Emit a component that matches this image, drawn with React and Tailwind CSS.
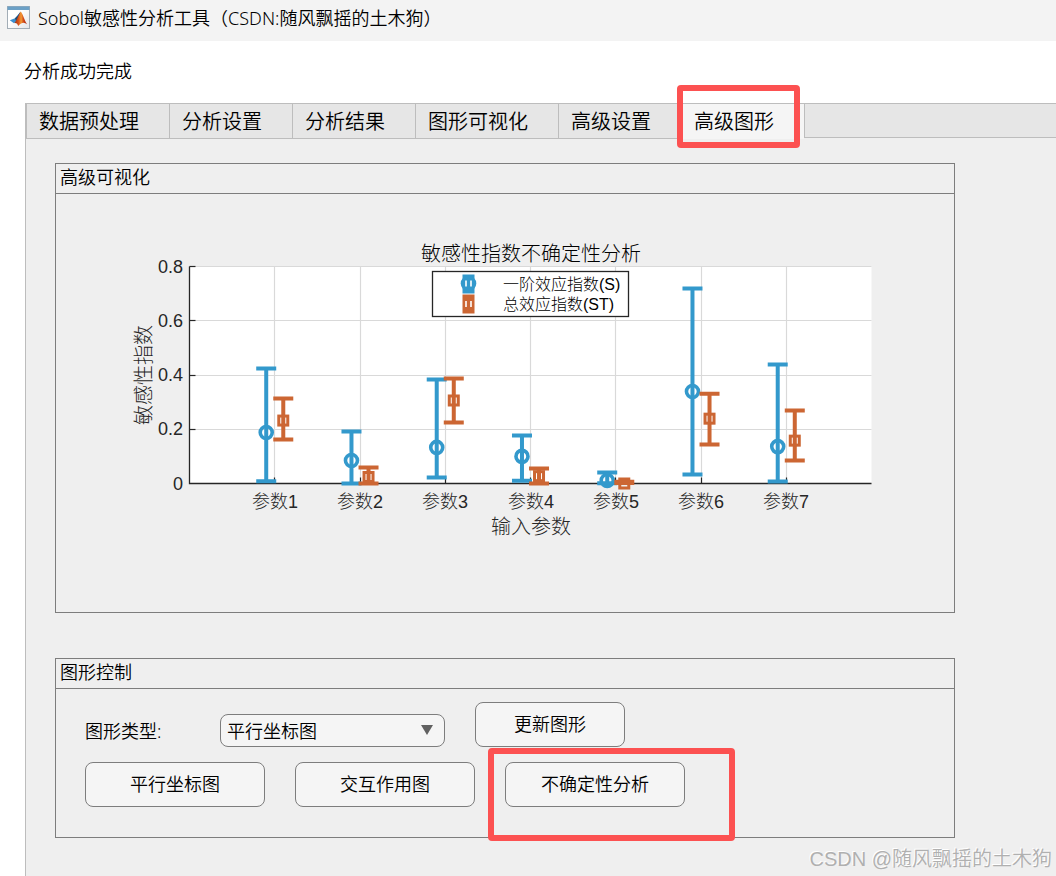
import React, { useState } from 'react';

const tabs = ['数据预处理', '分析设置', '分析结果', '图形可视化', '高级设置', '高级图形'];

const BLUE = '#3399cc';
const ORANGE = '#cc6633';

// [low, value, high] for the first-order (s) and total (st) index
const data = [
  { name: '参数1', s: [0.008, 0.188, 0.424], st: [0.162, 0.232, 0.313] },
  { name: '参数2', s: [0, 0.085, 0.192], st: [0, 0.024, 0.059] },
  { name: '参数3', s: [0.022, 0.133, 0.383], st: [0.225, 0.306, 0.387] },
  { name: '参数4', s: [0.01, 0.1, 0.177], st: [0, 0.027, 0.055] },
  { name: '参数5', s: [0.001, 0.011, 0.041], st: [0.002, 0, 0.006] },
  { name: '参数6', s: [0.033, 0.339, 0.719], st: [0.144, 0.239, 0.331] },
  { name: '参数7', s: [0.007, 0.136, 0.439], st: [0.085, 0.158, 0.269] },
];

const LEFT = 133.5;
const RIGHT = 815.5;
const TOP = 72.5;
const BOTTOM = 289.5;

const xPos = (v) => LEFT + ((RIGHT - LEFT) / 8) * v;
const yPos = (v) => BOTTOM - ((BOTTOM - TOP) / 0.8) * v;

const ErrorBar = ({ x, range, color, square }) => {
  const [low, mid, high] = range.map(yPos);
  return (
    <g stroke={color} strokeWidth="4" fill="none">
      <path d={`M${x} ${low}V${high}M${x - 10} ${low}h20M${x - 10} ${high}h20`} />
      {square ? (
        <rect x={x - 4.5} y={mid - 4.5} width="9" height="9" strokeWidth="3" />
      ) : (
        <circle cx={x} cy={mid} r="6" strokeWidth="3.6" />
      )}
    </g>
  );
};

const Chart = () => (
  <svg viewBox="0 0 898 418" className="block w-full" role="img" aria-label="敏感性指数不确定性分析">
    <rect x={LEFT} y={TOP - 0.5} width={RIGHT - LEFT} height={BOTTOM - TOP} fill="#fff" />

    {/* Grid */}
    <g stroke="#d9d9d9" strokeWidth="1.2">
      {[0.2, 0.4, 0.6, 0.8].map((v) => (
        <line key={v} x1={LEFT} x2={RIGHT} y1={Math.floor(yPos(v)) + 0.5} y2={Math.floor(yPos(v)) + 0.5} />
      ))}
      {data.map((d, i) => (
        <line key={d.name} x1={Math.floor(xPos(i + 1)) + 0.5} x2={Math.floor(xPos(i + 1)) + 0.5} y1={TOP} y2={BOTTOM} />
      ))}
    </g>

    {/* Axes */}
    <path d={`M${LEFT} ${TOP}V${BOTTOM}H${RIGHT}`} stroke="#262626" fill="none" strokeWidth="1.3" />
    <g stroke="#262626" strokeWidth="1.2">
      {[0.2, 0.4, 0.6, 0.8].map((v) => (
        <line key={v} x1={LEFT} x2={LEFT + 6} y1={Math.floor(yPos(v)) + 0.5} y2={Math.floor(yPos(v)) + 0.5} />
      ))}
      {data.map((d, i) => (
        <line key={d.name} x1={Math.floor(xPos(i + 1)) + 0.5} x2={Math.floor(xPos(i + 1)) + 0.5} y1={BOTTOM - 6} y2={BOTTOM} />
      ))}
    </g>

    {data.map((d, i) => (
      <ErrorBar key={d.name} x={xPos(i + 0.9)} range={d.s} color={BLUE} />
    ))}
    {data.map((d, i) => (
      <ErrorBar key={d.name} x={xPos(i + 1.1)} range={d.st} color={ORANGE} square />
    ))}

    {/* Labels */}
    <g fill="#262626" className="font-['Liberation_Sans','Noto_Sans_CJK_SC',sans-serif] font-light">
      <text x="475" y="67" fontSize="20" textAnchor="middle" fill="#000">敏感性指数不确定性分析</text>
      <g fontSize="18" textAnchor="end">
        {['0', '0.2', '0.4', '0.6', '0.8'].map((v) => (
          <text key={v} x="127" y={Math.round(yPos(Number(v))) + 6}>{v}</text>
        ))}
      </g>
      <g fontSize="18" textAnchor="middle">
        {data.map((d, i) => (
          <text key={d.name} x={Math.round(xPos(i + 1))} y="314">{d.name}</text>
        ))}
      </g>
      <text x="475" y="340" fontSize="20" textAnchor="middle">输入参数</text>
      <text transform="translate(95 181) rotate(-90)" fontSize="20" textAnchor="middle">敏感性指数</text>
    </g>

    {/* Legend */}
    <rect x="376.5" y="77.5" width="196" height="45" fill="#fff" stroke="#262626" strokeWidth="1.3" />
    <rect x="406.5" y="80.5" width="12" height="19" fill={BLUE} />
    <circle cx="412.5" cy="89.5" r="7.8" fill={BLUE} />
    <rect x="406.5" y="100.5" width="12" height="19" fill={ORANGE} />
    <path d="M410 86.5v6M415 86.5v6M410 107v6M415 107v6" stroke="#fff" strokeWidth="1.6" />
    <g fontSize="16" fill="#000" className="font-['Liberation_Sans','Noto_Sans_CJK_SC',sans-serif] font-light">
      <text x="447" y="96">一阶效应指数(S)</text>
      <text x="447" y="116">总效应指数(ST)</text>
    </g>
  </svg>
);

const AppIcon = () => (
  <svg viewBox="0 0 23 23" className="h-[23px] w-[23px]" aria-hidden="true">
    <defs>
      <linearGradient id="frame" x1="0" y1="0" x2="1" y2="1">
        <stop offset="0.4" stopColor="#fff" />
        <stop offset="1" stopColor="#e3e6ea" />
      </linearGradient>
      <linearGradient id="peak" x1="0" y1="0" x2="1" y2="0">
        <stop offset="0" stopColor="#8a2a18" />
        <stop offset="0.35" stopColor="#d9551c" />
        <stop offset="0.55" stopColor="#f39a35" />
        <stop offset="0.75" stopColor="#cf4417" />
        <stop offset="1" stopColor="#a82a12" />
      </linearGradient>
    </defs>
    <rect x="0.5" y="0.5" width="22" height="22" fill="url(#frame)" stroke="#a3adb6" />
    <rect x="0.5" y="0.5" width="22" height="3.5" fill="#6ba0c6" />
    <path d="M2.8 14.3L8 12.2 13.5 5.8 11 14 7 17.2z" fill="#3a8fd0" />
    <path d="M8 12.2L10.5 10 13.5 5.8 11.3 13.5 9 15z" fill="#284a6d" />
    <path d="M7 17.2C9.5 15.5 11 10 13.7 5.5 15.8 7.5 17.2 14 20 18.2 17.4 16 14.8 16 11.2 20 10.5 17.8 9.5 16.8 7 17.2z" fill="url(#peak)" />
  </svg>
);

const Panel = ({ title, children }) => (
  <section className="w-full max-w-[900px] border border-[#7d7d7d]">
    <h2 className="h-[30px] border-b border-[#7d7d7d] pl-1 text-lg leading-[26px]">{title}</h2>
    {children}
  </section>
);

const Button = ({ children, className = 'w-[180px]' }) => (
  <button
    type="button"
    className={`h-[45px] rounded-lg border border-[#7d7d7d] bg-[#f5f5f5] pb-0.5 text-lg hover:bg-white ${className}`}
  >
    {children}
  </button>
);

// Red frame drawn over the part it points out
const Highlight = ({ className }) => (
  <span className={`pointer-events-none absolute z-10 rounded-sm border-6 border-[#fc5151] ${className}`} />
);

const App = () => {
  const [active, setActive] = useState('高级图形');

  return (
    <div className="relative flex min-h-screen flex-col overflow-hidden bg-white font-['Noto_Sans','Noto_Sans_CJK_SC',sans-serif] font-[350] text-black">
      {/* Title bar */}
      <header className="flex h-[41px] items-center gap-2 bg-[#f3f3f3] pb-1.5 pl-[7px]">
        <AppIcon />
        <h1 className="text-lg leading-7">Sobol敏感性分析工具（CSDN:随风飘摇的土木狗）</h1>
      </header>

      <p className="pt-4 pb-[18px] pl-6 text-lg leading-7">分析成功完成</p>

      <main className="ml-[25px] flex flex-1 flex-col border-l border-[#bdbdbd] bg-[#efefef]">
        {/* Tabs */}
        <div className="flex h-9 shrink-0" role="tablist">
          {tabs.map((tab) => (
            <button
              key={tab}
              type="button"
              role="tab"
              aria-selected={active === tab}
              onClick={() => setActive(tab)}
              className={`relative border-t border-b border-l border-t-[#bdbdbd] border-l-[#bdbdbd] pt-0.5 pr-[30px] pl-3 text-xl whitespace-nowrap ${
                active === tab ? 'border-b-[#f5f5f5] bg-[#f5f5f5]' : 'border-b-[#bdbdbd] bg-[#e6e6e6]'
              }`}
            >
              {tab}
              {tab === '高级图形' && <Highlight className="-top-[19px] -left-[5px] h-[63px] w-[123px]" />}
            </button>
          ))}
          <div className="mb-px flex-1 border border-r-0 border-[#bdbdbd] bg-[#e6e6e6]" />
        </div>

        <div className="flex flex-col gap-[45px] pt-6 pr-6 pb-9 pl-[29px]">
          <Panel title="高级可视化">
            <Chart />
          </Panel>

          <Panel title="图形控制">
            <div className="flex flex-col gap-[15px] pt-[13px] pb-[30px] pl-[29px]">
              <div className="flex items-end gap-[30px]">
                <label htmlFor="chart-type" className="w-[105px] text-lg leading-8">图形类型:</label>
                <div className="relative">
                  <select
                    id="chart-type"
                    className="h-[33px] w-[225px] appearance-none rounded-lg border border-[#7d7d7d] bg-[#f5f5f5] pl-1.5 text-lg leading-7"
                  >
                    <option>平行坐标图</option>
                    <option>交互作用图</option>
                    <option>不确定性分析</option>
                  </select>
                  <svg viewBox="0 0 12 10" className="pointer-events-none absolute top-[11px] right-3 h-2.5 w-3" aria-hidden="true">
                    <path d="M0 0h12L6 10z" fill="#616161" />
                  </svg>
                </div>
                <Button className="w-[150px]">更新图形</Button>
              </div>
              <div className="flex gap-[30px]">
                <Button>平行坐标图</Button>
                <Button>交互作用图</Button>
                <div className="relative">
                  <Button>不确定性分析</Button>
                  <Highlight className="-top-[14px] -left-[17px] h-[93px] w-[247px]" />
                </div>
              </div>
            </div>
          </Panel>
        </div>
      </main>

      {/* Watermark */}
      <p className="absolute right-1 bottom-px font-['Liberation_Sans','Noto_Sans_CJK_SC',sans-serif] text-xl leading-8 text-[#b0b0b0] [text-shadow:-1px_-1px_0_#fff]">
        CSDN @随风飘摇的土木狗
      </p>
    </div>
  );
};

export default App;
